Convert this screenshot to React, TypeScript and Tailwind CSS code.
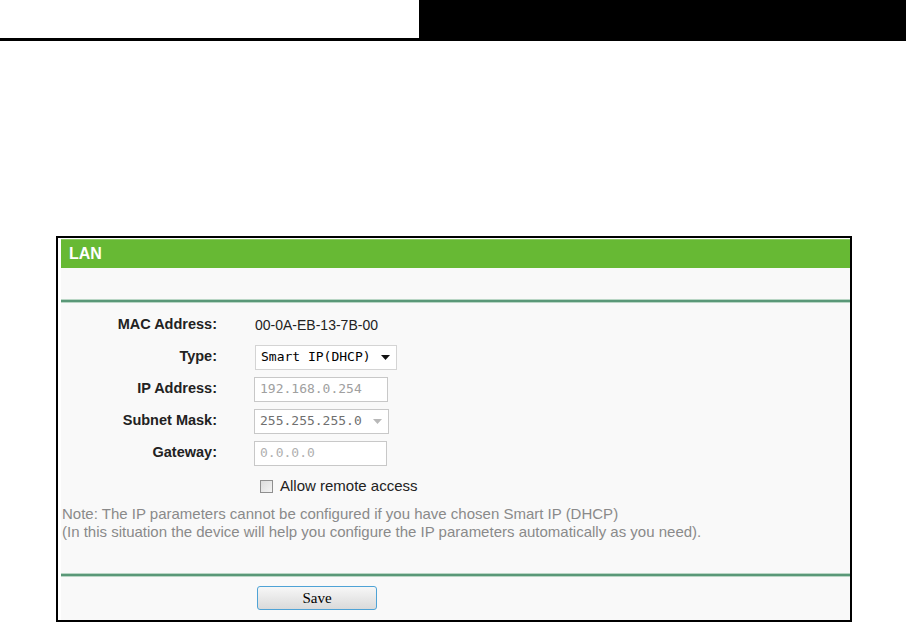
import React from "react";

const arial = { fontFamily: '"Liberation Sans", Arial, sans-serif' };

function Row({ label, children }: { label: string; children: React.ReactNode }) {
  return (
    <div className="flex h-[32px] items-center">
      <div className="w-[156px] text-right text-[14.5px] font-bold text-[#222]">{label}</div>
      <div className="ml-[38px] flex items-center">{children}</div>
    </div>
  );
}

function Arrow({ dim }: { dim?: boolean }) {
  return (
    <svg width="9" height="5" viewBox="0 0 9 5" className="shrink-0">
      <path d="M0 0h9L4.5 5z" fill={dim ? "#b8b8b8" : "#111"} />
    </svg>
  );
}

export default function App() {
  return (
    <div className="h-[622px] w-[906px] overflow-hidden bg-white" style={arial}>
      {/* top strip */}
      <div className="flex h-[41px]">
        <div className="w-[419px] border-b-[3px] border-black" />
        <div className="flex-1 bg-black" />
      </div>

      <div className="ml-[56px] mt-[195px] h-[386px] w-[796px] border-2 border-black bg-white pl-[3px] pt-[1px]">
        <div className="flex h-full flex-col bg-[#f9f9f9]">
          <div className="flex h-[29px] items-center border-t border-[#8ccb5f] bg-[#67b934] pl-[8px] text-[16px] font-bold text-white">
            LAN
          </div>
          <div className="h-[31px]" />
          <div className="h-[4px] border-y border-[#b9d6c5] bg-[#5a9878]" />

          <div className="pt-[6px]">
            <Row label="MAC Address:">
              <span className="text-[14px] text-[#222]">00-0A-EB-13-7B-00</span>
            </Row>
            <Row label="Type:">
              <div
                className="flex h-[25px] w-[142px] items-center justify-between border border-[#d4d4d4] bg-white pl-[5px] pr-[6px] text-[13px] text-black"
                style={{ fontFamily: '"DejaVu Sans Mono", monospace' }}
              >
                <span>Smart IP(DHCP)</span>
                <Arrow />
              </div>
            </Row>
            <Row label="IP Address:">
              <div
                className="-ml-px flex h-[25px] w-[134px] items-center border border-[#c8c8c8] bg-white pl-[5px] text-[13px] text-[#a0a0a0]"
                style={{ fontFamily: '"DejaVu Sans Mono", monospace' }}
              >
                192.168.0.254
              </div>
            </Row>
            <Row label="Subnet Mask:">
              <div
                className="-ml-px flex h-[25px] w-[135px] items-center justify-between border border-[#c8c8c8] bg-white pl-[5px] pr-[6px] text-[13px] text-[#707070]"
                style={{ fontFamily: '"DejaVu Sans Mono", monospace' }}
              >
                <span>255.255.255.0</span>
                <Arrow dim />
              </div>
            </Row>
            <Row label="Gateway:">
              <div
                className="-ml-px flex h-[25px] w-[133px] items-center border border-[#c8c8c8] bg-white pl-[5px] text-[13px] text-[#b0b0b0]"
                style={{ fontFamily: '"DejaVu Sans Mono", monospace' }}
              >
                0.0.0.0
              </div>
            </Row>
            <div className="flex h-[32px] items-center pt-[3px] pl-[199px]">
              <span className="h-[13px] w-[13px] border border-[#8f8f8f] bg-gradient-to-br from-[#dcdcdc] to-[#f4f4f4]" />
              <span className="ml-[7px] text-[15px] text-[#222]">Allow remote access</span>
            </div>
          </div>

          <div className="pl-px pt-[4px] text-[15px] leading-[18px] text-[#8a8a8a]">
            <div>Note: The IP parameters cannot be configured if you have chosen Smart IP (DHCP)</div>
            <div>(In this situation the device will help you configure the IP parameters automatically as you need).</div>
          </div>

          <div className="mt-[32px] h-[4px] border-y border-[#b9d6c5] bg-[#5a9878]" />

          <div className="flex pl-[196px] pt-[9px]">
            <button
              className="h-[24px] w-[120px] rounded-[3px] border border-[#4fa3d6] bg-gradient-to-b from-[#f7f7f7] to-[#dadada] text-[15px] text-black"
              style={{ fontFamily: '"Liberation Serif", serif' }}
            >
              Save
            </button>
          </div>
        </div>
      </div>
    </div>
  );
}
